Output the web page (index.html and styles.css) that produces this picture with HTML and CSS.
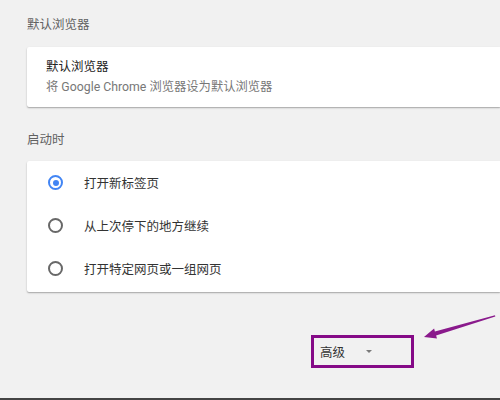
FILE: index.html
```html
<!DOCTYPE html>
<html lang="zh-CN">
<head>
<meta charset="utf-8">
<title>设置</title>
<link rel="stylesheet" href="styles.css">
</head>
<body>
<main class="page">
  <h2 class="section-title first">默认浏览器</h2>
  <div class="card default-card">
    <div class="card-title">默认浏览器</div>
    <div class="card-sub">将 Google Chrome 浏览器设为默认浏览器</div>
  </div>

  <h2 class="section-title">启动时</h2>
  <div class="card radio-card">
    <label class="radio-row"><span class="radio checked"></span><span class="radio-label">打开新标签页</span></label>
    <label class="radio-row"><span class="radio"></span><span class="radio-label">从上次停下的地方继续</span></label>
    <label class="radio-row"><span class="radio"></span><span class="radio-label">打开特定网页或一组网页</span></label>
  </div>

  <div class="advanced-wrap">
    <div class="advanced">
      <span class="advanced-text">高级</span>
      <span class="caret"></span>
    </div>
  </div>
</main>
<svg class="annot-arrow" width="500" height="400" viewBox="0 0 500 400">
  <polygon points="424,337 434.1,328.6 434.9,331.6 495,315.3 495.3,316.6 436.1,335.6 437,338.6" fill="#8a1a8c"/>
</svg>
<div class="bottom-bar"></div>
</body>
</html>
```

FILE: styles.css
```css
html, body {
  margin: 0;
  padding: 0;
}
body {
  width: 500px;
  height: 400px;
  overflow: hidden;
  background: #f1f1f1;
  font-family: Roboto, "Noto Sans CJK SC", sans-serif;
  font-size: 12.5px;
  color: #333;
  display: flex;
  flex-direction: column;
  position: relative;
}
.page {
  padding: 15px 0 0 27px;
  flex: 1;
}
.section-title {
  margin: 23px 0 11px 0;
  font-size: 12.5px;
  font-weight: normal;
  line-height: 20px;
  color: #616161;
}
.section-title.first {
  margin-top: 0;
  margin-bottom: 12px;
}
.card {
  background: #fff;
  box-shadow: 0 1px 1px rgba(0,0,0,0.12), 0 1px 2px rgba(0,0,0,0.22);
  border-radius: 2px 0 0 2px;
}
.default-card {
  padding: 10px 19px;
  line-height: 20px;
}
.card-title {
  color: #222;
}
.card-sub {
  color: #777;
  font-size: 12.3px;
}
.radio-card {
  padding: 0 0 2px 0;
}
.radio-row {
  display: flex;
  align-items: center;
  height: 43px;
  padding-left: 21px;
  gap: 21px;
  color: #333;
}
.radio {
  width: 15px;
  height: 15px;
  box-sizing: border-box;
  border: 2px solid #686868;
  border-radius: 50%;
  flex: none;
  position: relative;
}
.radio.checked {
  border-color: #4285f4;
}
.radio.checked::after {
  content: "";
  position: absolute;
  left: 2.5px;
  top: 2.5px;
  width: 6px;
  height: 6px;
  border-radius: 50%;
  background: #4285f4;
}
.advanced-wrap {
  margin-top: 43px;
  padding-left: 284px;
}
.advanced {
  width: 103px;
  height: 33px;
  box-sizing: border-box;
  border: 3px solid #850a87;
  display: flex;
  align-items: center;
  padding-left: 6px;
}
.advanced-text {
  color: #333;
}
.caret {
  margin-left: 21px;
  width: 0;
  height: 0;
  border-left: 3px solid transparent;
  border-right: 3px solid transparent;
  border-top: 3px solid #7a7a7a;
}
.annot-arrow {
  position: absolute;
  left: 0;
  top: 0;
  pointer-events: none;
}
.bottom-bar {
  height: 2px;
  background: #444;
  flex: none;
}
```
